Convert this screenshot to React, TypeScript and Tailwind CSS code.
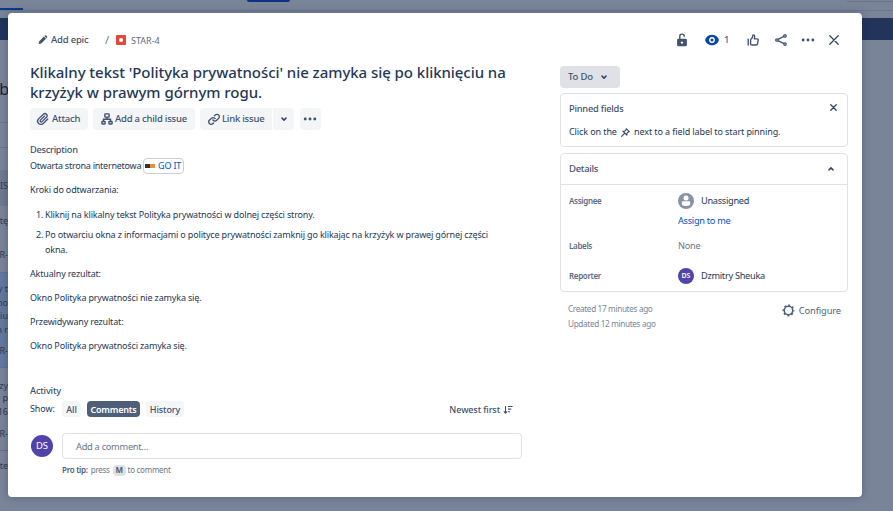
import React from "react";

type IconProps = { className?: string };

const Pencil = () => (
  <svg className="h-3 w-3" viewBox="0 0 12 12" fill="#42526e">
    <path d="M2.1 7.4 6.9 2.6 9 4.7 4.2 9.5 1.6 10.1z" />
    <path d="M7.4 2.1 8.1 1.5Q8.7 1.1 9.3 1.6L10 2.3Q10.4 2.9 10 3.5L9.4 4.2z" />
  </svg>
);

const Attachment = () => (
  <svg className="h-4 w-4" viewBox="0 0 24 24" fill="#42526e">
    <path d="M11.643 17.965c-1.53 1.495-4.016 1.496-5.542.004a3.773 3.773 0 01.002-5.412l7.147-6.985a2.316 2.316 0 013.22-.004c.893.873.895 2.282.004 3.153l-6.703 6.55a.653.653 0 01-.914-.008.62.62 0 010-.902l6.229-6.087a.941.941 0 000-1.353.995.995 0 00-1.384 0l-6.23 6.087a2.502 2.502 0 000 3.607 2.643 2.643 0 003.683.009l6.703-6.55a4.074 4.074 0 00-.003-5.859 4.306 4.306 0 00-5.986.004l-7.147 6.985a5.655 5.655 0 00-.001 8.118c2.29 2.237 6.015 2.238 8.304.001l6.84-6.684a.937.937 0 000-1.353.995.995 0 00-1.384 0l-6.838 6.684z" />
  </svg>
);

const ChildIssues = () => (
  <svg className="h-3 w-3" viewBox="0 0 12 12" fill="none" stroke="#42526e" strokeWidth="1.4">
    <rect x="3.9" y="0.9" width="4.2" height="3.2" rx="0.4" />
    <path d="M6 4.1V6.2M2.5 8.6V6.3H9.5V8.6" />
    <rect x="0.9" y="8.5" width="3.2" height="2.5" rx="0.4" />
    <rect x="7.9" y="8.5" width="3.2" height="2.5" rx="0.4" />
  </svg>
);

const LinkIcon = () => (
  <svg className="h-4 w-4" viewBox="0 0 24 24" fill="#42526e">
    <path d="M12.856 5.457l-.937.92a1.002 1.002 0 000 1.437 1.047 1.047 0 001.463 0l.984-.966c.967-.95 2.542-1.135 3.602-.288a2.54 2.54 0 01.203 3.81l-2.903 2.852a2.646 2.646 0 01-3.696 0l-1.11-1.09L9 13.57l1.108 1.089c1.822 1.788 4.802 1.788 6.622 0l2.905-2.852a4.558 4.558 0 00-.357-6.82c-1.893-1.517-4.695-1.226-6.422.47" />
    <path d="M11.144 19.543l.937-.92a1.002 1.002 0 000-1.437 1.047 1.047 0 00-1.462 0l-.985.966c-.967.95-2.542 1.135-3.602.288a2.54 2.54 0 01-.203-3.81l2.903-2.852a2.646 2.646 0 013.696 0l1.11 1.09L15 11.43l-1.108-1.089c-1.822-1.788-4.802-1.788-6.622 0l-2.905 2.852a4.558 4.558 0 00.357 6.82c1.893 1.517 4.695 1.226 6.422-.47" />
  </svg>
);

const Chevron = ({ className = "" }: IconProps) => (
  <svg className={"h-2 w-2 " + className} viewBox="0 0 8 8" fill="none" stroke="#344563" strokeWidth="1.5" strokeLinecap="round" strokeLinejoin="round">
    <path d="M2 3.1 4 5.1 6 3.1" />
  </svg>
);

const Dots = () => (
  <svg className="h-1 w-3.5" viewBox="0 0 14 4" fill="#42526e">
    <circle cx="2.2" cy="2" r="1.45" />
    <circle cx="7" cy="2" r="1.45" />
    <circle cx="11.8" cy="2" r="1.45" />
  </svg>
);

const Unlock = () => (
  <svg className="h-3.5 w-3" viewBox="0 0 12 14">
    <path d="M3.8 6V3.2Q3.8 1.1 6 1.1Q8.2 1.1 8.2 3.2V3.8" fill="none" stroke="#42526e" strokeWidth="1.4" />
    <rect x="1.1" y="5.8" width="9.8" height="7.5" rx="1.3" fill="#42526e" />
    <circle cx="6" cy="9.6" r="1.2" fill="#fff" />
  </svg>
);

const Eye = () => (
  <svg className="h-3 w-3.5" viewBox="0 0 14 12">
    <path d="M7 .7C10.8.7 13.8 3.8 13.8 6S10.8 11.3 7 11.3.2 8.2.2 6 3.2.7 7 .7z" fill="#0747a6" />
    <circle cx="7" cy="6" r="2.2" fill="none" stroke="#fff" strokeWidth="1.4" />
  </svg>
);

const ThumbUp = () => (
  <svg className="h-3 w-3" viewBox="0 0 12 12" fill="none" stroke="#42526e" strokeWidth="1.35" strokeLinejoin="round" strokeLinecap="round">
    <path d="M1.2 5.2V11" />
    <path d="M3.6 10V6.2Q3.6 5.4 4.3 4.8 5.7 3.6 5.8 1.6 5.9.9 6.6.9 7.7 1 7.7 2.5 7.6 3.8 7.2 4.8H10Q11.4 4.9 11.2 6.2L10.6 9.6Q10.4 11 9 11H4.8Q3.6 11 3.6 10z" />
  </svg>
);

const Share = () => (
  <svg className="h-3 w-3" viewBox="0 0 12 12" fill="none" stroke="#42526e" strokeWidth="1.3">
    <path d="M3 5.4 9 2.3M3 6.6 9 9.7" />
    <circle cx="1.9" cy="6" r="1.2" />
    <circle cx="10" cy="1.9" r="1.2" />
    <circle cx="10" cy="10.1" r="1.2" />
  </svg>
);

const Cross = ({ className = "" }: IconProps) => (
  <svg className={className} viewBox="0 0 10 10" fill="none" stroke="#344563" strokeWidth="1.3" strokeLinecap="round">
    <path d="M.8.8 9.2 9.2M9.2.8.8 9.2" />
  </svg>
);

const SmallCross = () => (
  <svg className="mb-[4px] mr-0.5 h-[7px] w-[7px]" viewBox="0 0 7 7" fill="none" stroke="#344563" strokeWidth="1.3" strokeLinecap="round">
    <path d="M.8.8 6.2 6.2M6.2.8.8 6.2" />
  </svg>
);

const Pin = () => (
  <svg className="h-[9px] w-[9px]" viewBox="0 0 9 9" fill="none" stroke="#344563" strokeWidth="1.1" strokeLinejoin="round" strokeLinecap="round">
    <path d="M5.3.7 8.3 3.7 7.2 4 5.9 5.3 5.8 7.2 1.8 3.2 3.7 3.1 5 1.8z" />
    <path d="M3.6 5.4.7 8.3" />
  </svg>
);

const Person = () => (
  <svg className="h-4 w-4" viewBox="0 0 16 16">
    <circle cx="8" cy="8" r="8" fill="#8993a4" />
    <circle cx="8" cy="5.1" r="2.5" fill="#fff" />
    <path d="M3.8 9.4Q3.8 8.3 4.9 8.3H11.1Q12.2 8.3 12.2 9.4V11Q12.2 12.9 8 12.9T3.8 11z" fill="#fff" />
  </svg>
);

const Gear = () => (
  <svg className="h-[13px] w-[13px]" viewBox="0 0 13 13" fill="none" stroke="#505f79">
    <circle cx="6.5" cy="6.5" r="4.2" strokeWidth="1.5" />
    <circle cx="6.5" cy="6.5" r="5.3" strokeWidth="1.3" strokeDasharray="2.1 2.06" strokeDashoffset="1.05" />
  </svg>
);

const Sort = () => (
  <svg className="h-2.5 w-2.5" viewBox="0 0 10 10" fill="none" stroke="#42526e" strokeWidth="1.1">
    <path d="M2.5 1V8M.8 6.3 2.5 8.1 4.2 6.3M5 1.5H9.6M5 4.1H8.2M5 6.7H7" />
  </svg>
);

const StripLines = [
  { top: "top-[180px]", text: "IS" },
  { top: "top-[215px]", text: "tę" },
  { top: "top-[249px]", text: "R-" },
  { top: "top-[283px]", text: "y t" },
  { top: "top-[297px]", text: "no" },
  { top: "top-[310px]", text: "iu" },
  { top: "top-[324px]", text: "n r" },
  { top: "top-[345px]", text: "R-" },
  { top: "top-[380px]", text: "zy" },
  { top: "top-[392px]", text: "p" },
  { top: "top-[406px]", text: "16" },
  { top: "top-[428px]", text: "R-" },
  { top: "top-[460px]", text: "ate" },
];

/* Board page dimmed behind the dialog */
const Backdrop = () => (
  <div className="absolute inset-0 flex flex-col overflow-hidden bg-[#7a8499]">
    <div className="flex h-[11px] shrink-0 justify-between border-b border-[#6d7890]">
      <div className="mt-2 h-0.5 w-[23px] bg-[#0a3a88]" />
      <div className="ml-[224px] h-0.5 w-[43px] rounded-b-sm bg-[#083583]" />
      <div className="ml-auto h-[2px] w-[46px] rounded-bl-sm border-b border-[#68748c]" />
    </div>
    <div className="mt-[7px] h-[22px] shrink-0 bg-[#22345a]" />
    <div className="mt-[82px] h-px w-2 shrink-0 bg-[#6b7690]" />
    <div className="mt-6 h-px w-2 shrink-0 bg-[#6b7690]" />
    <div className="mt-[22px] h-9 w-2 shrink-0 bg-[#6f7990]" />
    <div className="mt-[66px] h-[96px] w-2 shrink-0 border-y border-[#66728c] bg-[#65799f]" />
    <div className="mt-[82px] h-px w-2 shrink-0 bg-[#66728c]" />
    <span className="absolute right-[884px] top-[77px] text-[16px] leading-6 text-[#13233f]">b</span>
    {StripLines.map((l) => (
      <span key={l.top} className={"absolute right-[885px] whitespace-nowrap text-[9px] leading-3 text-[#2c3a56] " + l.top}>
        {l.text}
      </span>
    ))}
  </div>
);

const Header = () => (
  <header className="mb-px flex h-[26px] items-center text-[9.5px] text-[#42526e]">
    <div className="flex w-[530px] items-center pl-[7px]">
      <Pencil />
      <span className="ml-0.5 w-[54px] pt-px font-medium tracking-[-0.2px]">Add epic</span>
      <span className="w-[11px] text-[11px] text-[#6b778c]">/</span>
      <span className="flex h-2.5 w-2.5 items-center justify-center rounded-[1px] bg-[#e5493a]">
        <span className="h-1 w-1 rounded-full bg-white" />
      </span>
      <span className="ml-[5px] pt-px text-[9px] text-[#5e6c84]">STAR-4</span>
    </div>
    <div className="ml-[116px] flex items-center">
      <Unlock />
      <span className="ml-[17px] flex w-[42px] items-center gap-[5px] text-[#0747a6]">
        <Eye />
        <span>1</span>
      </span>
      <ThumbUp />
      <span className="ml-4"><Share /></span>
      <span className="ml-3.5"><Dots /></span>
      <span className="ml-3.5"><Cross className="h-2.5 w-2.5" /></span>
    </div>
  </header>
);

const Toolbar = () => (
  <div className="mt-[6px] flex h-[22px] text-[9.5px] font-medium tracking-[-0.22px] text-[#42526e]">
    <div className="flex w-[58px] items-center rounded-sm bg-[#f4f5f7] pl-[5px]">
      <Attachment />
      <span className="ml-px">Attach</span>
    </div>
    <div className="ml-[5px] flex w-[102px] items-center rounded-sm bg-[#f4f5f7] pl-2">
      <ChildIssues />
      <span className="ml-[2px] whitespace-nowrap">Add a child issue</span>
    </div>
    <div className="ml-[5px] flex w-[72px] items-center rounded-l-sm bg-[#f4f5f7] pl-1.5">
      <LinkIcon />
      <span className="whitespace-nowrap">Link issue</span>
    </div>
    <div className="ml-px flex w-[21px] items-center justify-center rounded-r-sm bg-[#f4f5f7]">
      <Chevron />
    </div>
    <div className="ml-[6px] flex w-[21px] items-center rounded-sm bg-[#f4f5f7] pl-[3px]">
      <Dots />
    </div>
  </div>
);

const Description = () => (
  <section className="mt-3 text-[9px] leading-4 tracking-[-0.165px] text-[#253858]">
    <h2 className="text-[9.3px] font-medium tracking-[-0.3px] text-[#42526e]">Description</h2>
    <p className="flex items-center">
      <span className="w-[113px] whitespace-nowrap tracking-[-0.24px]">Otwarta strona internetowa</span>
      <span className="flex h-4 w-[41px] items-center rounded-sm border border-[#c9ced8] pl-px">
        <span className="flex h-1 w-2.5">
          <span className="w-1/2 bg-[#333]" />
          <span className="w-1/2 bg-[#f08a3c]" />
        </span>
        <span className="ml-[3px] whitespace-nowrap text-[#0052cc]">GO IT</span>
      </span>
    </p>
    <p className="mt-2">Kroki do odtwarzania:</p>
    <ol className="mt-[9px] flex flex-col gap-[5px] pl-1.5 leading-[15px] tracking-[-0.155px]">
      <li className="flex">
        <span className="w-[9px] shrink-0">1.</span>
        <span>Kliknij na klikalny tekst Polityka prywatności w dolnej części strony.</span>
      </li>
      <li className="flex">
        <span className="w-[9px] shrink-0">2.</span>
        <span className="whitespace-nowrap">
          Po otwarciu okna z informacjami o polityce prywatności zamknij go klikając na krzyżyk w prawej górnej części
          <br />
          okna.
        </span>
      </li>
    </ol>
    <p className="mt-[9px]">Aktualny rezultat:</p>
    <p className="mt-2">Okno Polityka prywatności nie zamyka się.</p>
    <p className="mt-2">Przewidywany rezultat:</p>
    <p className="mt-2">Okno Polityka prywatności zamyka się.</p>
  </section>
);

const Activity = () => (
  <section className="mt-[29px] text-[9px] tracking-[-0.1px] text-[#42526e]">
    <h2 className="text-[9.3px] font-medium leading-4 tracking-[-0.2px] text-[#42526e]">Activity</h2>
    <div className="mt-[2px] flex h-4 items-center font-medium">
      <span className="w-8 font-normal text-[#253858]">Show:</span>
      <span className="flex h-4 w-[19px] items-center justify-center rounded-sm bg-[#f4f5f7] pt-px">All</span>
      <span className="ml-1.5 flex h-4 w-[53px] items-center justify-center rounded-sm bg-[#505f79] pt-px font-semibold tracking-[-0.2px] text-white">Comments</span>
      <span className="ml-1.5 flex h-4 w-[38px] items-center justify-center rounded-sm bg-[#f4f5f7] pt-px">History</span>
      <span className="ml-auto mr-[9px] flex items-center gap-[3px] pt-px">
        Newest first
        <Sort />
      </span>
    </div>
    <div className="mt-4 flex items-center">
      <span className="ml-px flex h-[22px] w-[22px] items-center justify-center rounded-full bg-[#5243aa] text-[9.5px] text-white">DS</span>
      <div className="ml-[9px] flex h-[26px] w-[460px] items-center rounded-sm border border-[#dfe1e6] pl-[13px] pt-px text-[9.3px] tracking-[-0.3px] text-[#6b778c]">
        Add a comment…
      </div>
    </div>
    <div className="ml-8 mt-[5px] flex h-3 items-center text-[8px] tracking-[-0.28px] text-[#6b778c]">
      <b className="font-semibold text-[#505f79]">Pro tip:</b>
      <span className="ml-[3px]">press</span>
      <span className="ml-[3px] mr-0.5 flex h-[11px] w-[13px] items-center justify-center rounded-sm bg-[#dfe1e6] font-bold text-[#505f79]">M</span>
      <span>to comment</span>
    </div>
  </section>
);

const Field = ({ label, height, children }: { label: string; height: string; children: React.ReactNode }) => (
  <div className={"flex " + height}>
    <span className="w-[109px] text-[8px] font-semibold leading-4 tracking-[-0.33px] text-[#5e6c84]">{label}</span>
    <div className="text-[9.2px] leading-4 tracking-[-0.28px] text-[#253858]">{children}</div>
  </div>
);

const Sidebar = () => (
  <aside className="ml-[38px] w-[288px] pt-3 text-[#253858]">
    <div className="flex h-[22px] w-[60px] items-center rounded-sm bg-[#dfe1e6] pl-2 text-[9.5px] font-medium tracking-[-0.15px] text-[#42526e]">
      <span className="w-[32px]">To Do</span>
      <Chevron />
    </div>
    <div className="mt-[5px] h-[54px] rounded-sm border border-[#dfe1e6] px-2 pt-[7px]">
      <div className="flex h-4 items-center justify-between">
        <span className="text-[9.3px] font-medium tracking-[-0.22px] text-[#42526e]">Pinned fields</span>
        <SmallCross />
      </div>
      <div className="mt-[7px] flex h-4 items-center whitespace-nowrap text-[9px] tracking-[-0.1px]">
        <span className="w-[52px]">Click on the</span>
        <Pin />
        <span className="ml-1">next to a field label to start pinning.</span>
      </div>
    </div>
    <div className="mt-1.5 h-[139px] rounded-sm border border-[#dfe1e6]">
      <div className="flex h-[31px] items-center justify-between border-b border-[#dfe1e6] pl-2 pr-3">
        <span className="text-[9.5px] font-medium tracking-[-0.3px] text-[#42526e]">Details</span>
        <Chevron className="rotate-180" />
      </div>
      <div className="pl-2 pt-2">
        <Field label="Assignee" height="h-[45px]">
          <div className="flex items-center gap-[7px]"><Person />Unassigned</div>
          <div className="mt-1 text-[#0052cc]">Assign to me</div>
        </Field>
        <Field label="Labels" height="h-[30px]">
          <span className="text-[#6b778c]">None</span>
        </Field>
        <Field label="Reporter" height="h-4">
          <div className="flex items-center gap-[7px]">
            <span className="flex h-4 w-4 items-center justify-center rounded-full bg-[#5243aa] text-[7px] font-semibold tracking-normal text-white">DS</span>
            Dzmitry Sheuka
          </div>
        </Field>
      </div>
    </div>
    <div className="mt-[9px] flex justify-between pl-2 pr-[7px] text-[8.2px] leading-[15px] tracking-[-0.34px] text-[#7a869a]">
      <div>
        <p>Created 17 minutes ago</p>
        <p>Updated 12 minutes ago</p>
      </div>
      <div className="flex h-[19px] items-center gap-1 text-[9.3px] tracking-[-0.1px] text-[#505f79]">
        <Gear />
        Configure
      </div>
    </div>
  </aside>
);

export default function App() {
  return (
    <div className="relative h-[511px] w-[893px] overflow-hidden font-['Noto_Sans',sans-serif]">
      <Backdrop />
      <main className="absolute left-2 top-[13px] h-[484px] w-[854px] rounded-sm bg-white pl-[22px] pt-[14px] shadow-[0_0_8px_rgba(9,30,66,0.3)]">
        <Header />
        <div className="flex">
          <div className="w-[492px] pt-[9px]">
            <h1 className="whitespace-nowrap text-[15px] font-medium leading-[19.5px] tracking-[-0.05px] text-[#253858]">
              Klikalny tekst 'Polityka prywatności' nie zamyka się po kliknięciu na
              <br />
              krzyżyk w prawym górnym rogu.
            </h1>
            <Toolbar />
            <Description />
            <Activity />
          </div>
          <Sidebar />
        </div>
      </main>
    </div>
  );
}
